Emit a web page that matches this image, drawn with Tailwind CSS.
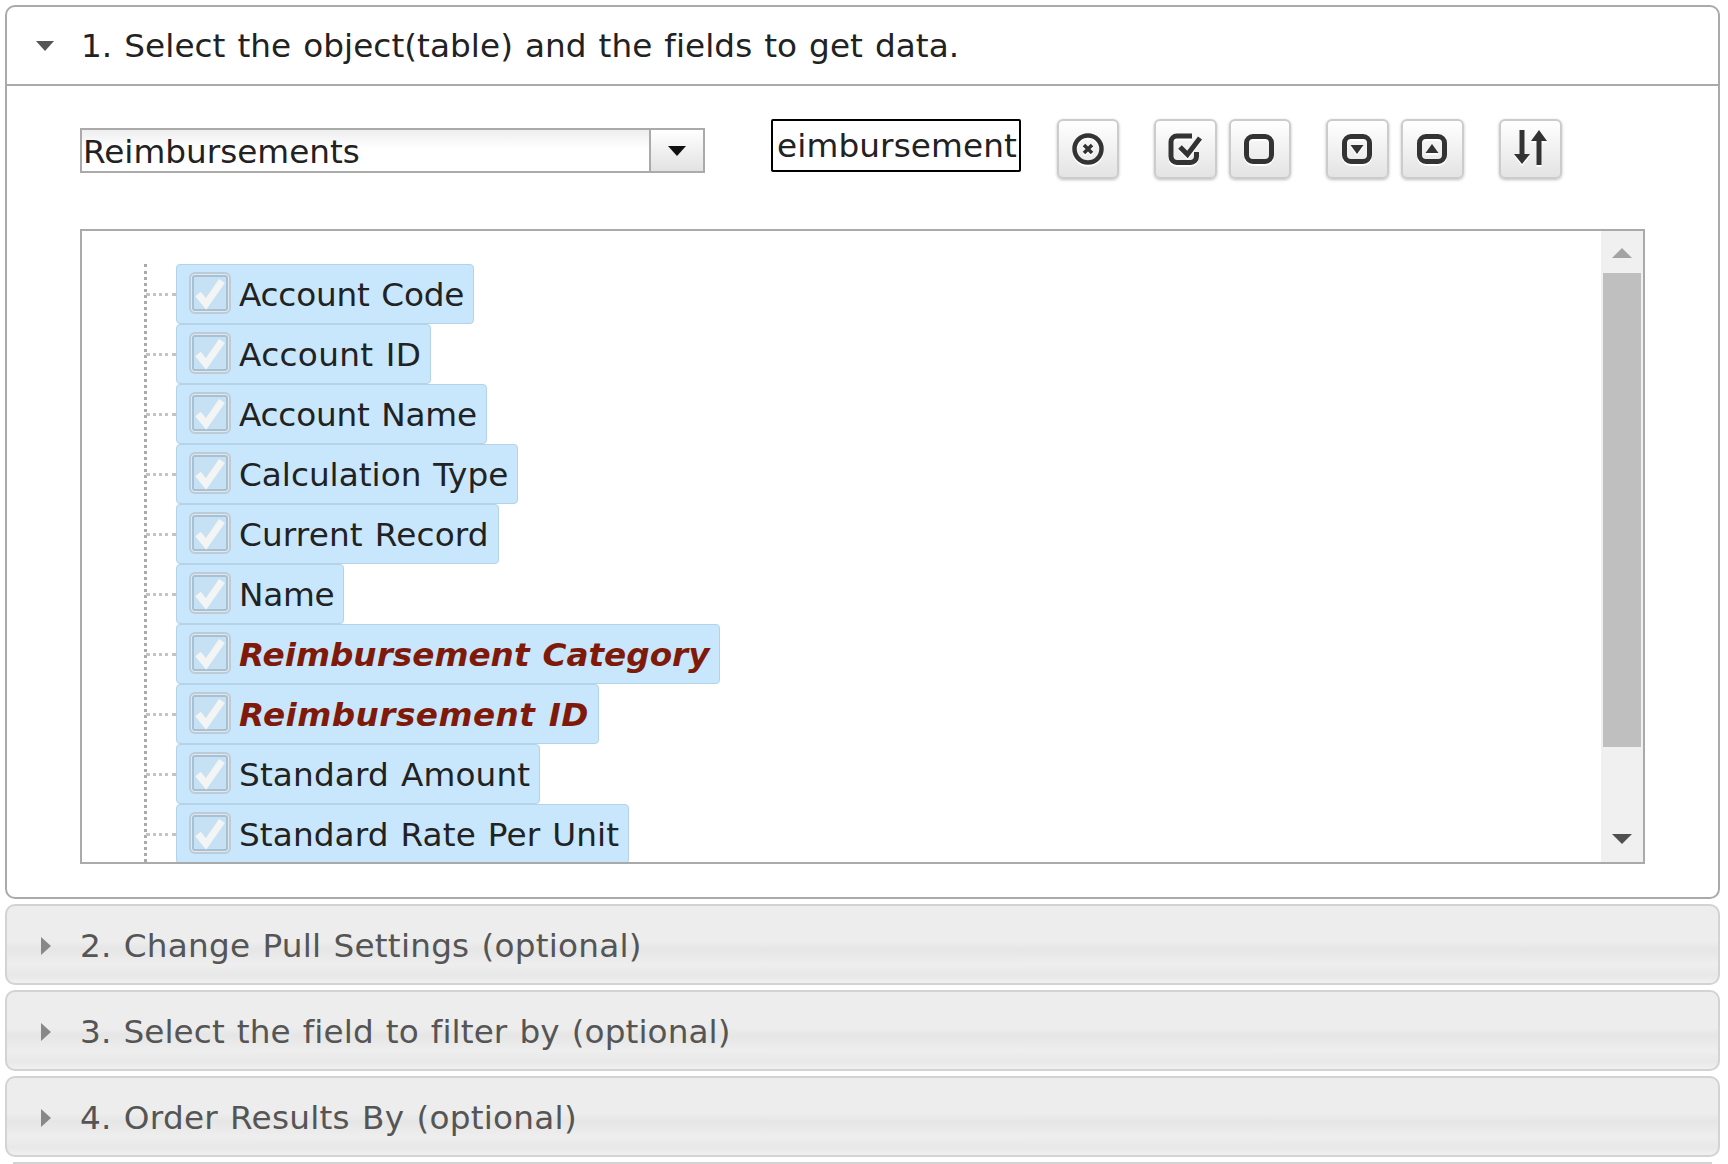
<!DOCTYPE html>
<html lang="en">
<head>
<meta charset="UTF-8" />
<title>Select Data</title>
<script src="https://cdn.jsdelivr.net/npm/@tailwindcss/browser@4"></script>
</head>
<body class="bg-white text-[#222] font-['DejaVu_Sans',sans-serif] text-[32.7px] [word-spacing:1.5px] overflow-hidden">
<div class="w-[1728px] h-[1164px] pt-[5px] pl-[5px] pr-[8px] flex flex-col gap-[6px] overflow-hidden">

	<!-- Step 1 -->
	<div class="h-[894px] mb-[-1px] shrink-0 border-2 border-[#aaa] rounded-[10px] flex flex-col">
		<div class="h-[79px] shrink-0 border-b-2 border-[#aaa] flex items-center pl-[29px]">
			<svg class="w-[18px] h-[10px]" viewBox="0 0 18 10"><path d="M0 0h18L9 10z" fill="#555"/></svg>
			<span class="ml-[27px] mt-[3px] tracking-[0.06px] whitespace-nowrap">1. Select the object(table) and the fields to get data.</span>
		</div>
		<div class="pl-[73px] pt-[33px] flex flex-col">
			<div class="flex h-[62px]">
				<!-- select -->
				<div class="w-[625px] h-[45px] mt-[9px] border-2 border-[#aaa] flex bg-[linear-gradient(#eee,#fff_45%)]">
					<span class="flex-1 pl-[1px] leading-[44px]">Reimbursements</span>
					<div class="w-[54px] border-l-2 border-[#aaa] bg-[linear-gradient(#fff,#e2e2e2)] flex items-center justify-center">
						<svg class="w-[18px] h-[10px]" viewBox="0 0 18 10"><path d="M0 0h18L9 10z" fill="#111"/></svg>
					</div>
				</div>
				<!-- search box -->
				<div class="ml-[66px] w-[250px] h-[53px] border-2 border-black rounded-[2px] overflow-hidden flex justify-end items-center pr-[2px] pt-[2px] tracking-[0.12px] whitespace-nowrap">eimbursement</div>
				<!-- toolbar -->
				<div class="ml-[36px] flex">
					<button class="w-[62px] h-[60px] border-2 border-[#ccc] rounded-[6px] bg-[linear-gradient(#fff,#e3e3e3)] shadow-[0_1px_3px_rgba(0,0,0,0.25)] flex items-center justify-center">
						<svg class="w-[32px] h-[32px] mb-[1px] mr-[1px] drop-shadow-[0_2px_0_#fff]" viewBox="0 0 32 32"><circle cx="16" cy="16" r="13.5" fill="none" stroke="#333" stroke-width="4.500"/><path d="M12 12l8 8M20 12l-8 8" stroke="#333" stroke-width="3.500"/></svg>
					</button>
					<button class="ml-[35px] w-[63px] h-[60px] border-2 border-[#ccc] rounded-[6px] bg-[linear-gradient(#fff,#e3e3e3)] shadow-[0_1px_3px_rgba(0,0,0,0.25)] flex items-center justify-center">
						<svg class="w-[34px] h-[32px] mb-[1px] mr-[1px] drop-shadow-[0_2px_0_#fff]" viewBox="0 0 34 32"><path d="M28.500 19v4.500a6 6 0 0 1-6 6H9a6 6 0 0 1-6-6V9a6 6 0 0 1 6-6h15" fill="none" stroke="#333" stroke-width="5"/><path d="M12 14l7.500 7.500L32 5" fill="none" stroke="#333" stroke-width="5"/></svg>
					</button>
					<button class="ml-[12px] w-[62px] h-[60px] border-2 border-[#ccc] rounded-[6px] bg-[linear-gradient(#fff,#e3e3e3)] shadow-[0_1px_3px_rgba(0,0,0,0.25)] flex items-center justify-center">
						<svg class="w-[32px] h-[32px] mb-[1px] mr-[2px] drop-shadow-[0_2px_0_#fff]" viewBox="0 0 32 32"><rect x="3.500" y="3.500" width="25" height="25" rx="6.500" fill="none" stroke="#333" stroke-width="5"/></svg>
					</button>
					<button class="ml-[35px] w-[63px] h-[60px] border-2 border-[#ccc] rounded-[6px] bg-[linear-gradient(#fff,#e3e3e3)] shadow-[0_1px_3px_rgba(0,0,0,0.25)] flex items-center justify-center">
						<svg class="w-[32px] h-[32px] mb-[1px] mr-[2px] drop-shadow-[0_2px_0_#fff]" viewBox="0 0 32 32"><rect x="3.500" y="3.500" width="25" height="25" rx="6.500" fill="none" stroke="#333" stroke-width="5"/><path d="M9.500 12h13L16 21z" fill="#333"/></svg>
					</button>
					<button class="ml-[12px] w-[63px] h-[60px] border-2 border-[#ccc] rounded-[6px] bg-[linear-gradient(#fff,#e3e3e3)] shadow-[0_1px_3px_rgba(0,0,0,0.25)] flex items-center justify-center">
						<svg class="w-[32px] h-[32px] mb-[1px] mr-[2px] drop-shadow-[0_2px_0_#fff]" viewBox="0 0 32 32"><rect x="3.500" y="3.500" width="25" height="25" rx="6.500" fill="none" stroke="#333" stroke-width="5"/><path d="M9.500 20h13L16 11z" fill="#333"/></svg>
					</button>
					<button class="ml-[35px] w-[63px] h-[60px] border-2 border-[#ccc] rounded-[6px] bg-[linear-gradient(#fff,#e3e3e3)] shadow-[0_1px_3px_rgba(0,0,0,0.25)] flex items-center justify-center">
						<svg class="w-[33px] h-[35px] mb-[3px] drop-shadow-[0_2px_0_#fff]" viewBox="0 0 33 35"><path d="M8 0v26M25 9v26" stroke="#333" stroke-width="5"/><path d="M0 24h16l-8 10zM17 11h16L25 0z" fill="#333"/></svg>
					</button>
				</div>
			</div>

			<!-- field tree -->
			<div class="mt-[48px] w-[1565px] h-[635px] border-2 border-[#aaa] flex overflow-hidden">
				<div class="flex-1 relative overflow-hidden pl-[94px] pt-[33px]">
					<div class="absolute left-[62px] top-[33px] bottom-0 border-l-[3px] border-dotted border-[#aaa]"></div>

					<div class="relative h-[60px] w-fit">
						<div class="absolute left-[-30px] top-[29px] w-[30px] border-t-[3px] border-dotted border-[#c4c4c4]"></div>
						<div class="h-[60px] border border-[#b5d3e6] rounded-[4px] bg-[#c8e7fd] flex items-center pl-[12px] pr-[9px]">
							<svg class="w-[42px] h-[42px] mr-[8px] mb-[3px]" viewBox="0 0 42 42"><rect x="1" y="1" width="40" height="40" rx="5" fill="#e1e9ee" stroke="#bccbd5" stroke-width="2"/><rect x="4" y="4" width="34" height="34" rx="2" fill="#c6e1f3" stroke="#a6c1d3" stroke-width="2"/><path d="M9 22l8 10L33 9" fill="none" stroke="#f3f4f4" stroke-width="7"/></svg>
							<span class="mt-[3px] tracking-[-0.2px] whitespace-nowrap">Account Code</span>
						</div>
					</div>
					<div class="relative h-[60px] w-fit">
						<div class="absolute left-[-30px] top-[29px] w-[30px] border-t-[3px] border-dotted border-[#c4c4c4]"></div>
						<div class="h-[60px] border border-[#b5d3e6] rounded-[4px] bg-[#c8e7fd] flex items-center pl-[12px] pr-[9px]">
							<svg class="w-[42px] h-[42px] mr-[8px] mb-[3px]" viewBox="0 0 42 42"><rect x="1" y="1" width="40" height="40" rx="5" fill="#e1e9ee" stroke="#bccbd5" stroke-width="2"/><rect x="4" y="4" width="34" height="34" rx="2" fill="#c6e1f3" stroke="#a6c1d3" stroke-width="2"/><path d="M9 22l8 10L33 9" fill="none" stroke="#f3f4f4" stroke-width="7"/></svg>
							<span class="mt-[3px] tracking-[0.35px] whitespace-nowrap">Account ID</span>
						</div>
					</div>
					<div class="relative h-[60px] w-fit">
						<div class="absolute left-[-30px] top-[29px] w-[30px] border-t-[3px] border-dotted border-[#c4c4c4]"></div>
						<div class="h-[60px] border border-[#b5d3e6] rounded-[4px] bg-[#c8e7fd] flex items-center pl-[12px] pr-[9px]">
							<svg class="w-[42px] h-[42px] mr-[8px] mb-[3px]" viewBox="0 0 42 42"><rect x="1" y="1" width="40" height="40" rx="5" fill="#e1e9ee" stroke="#bccbd5" stroke-width="2"/><rect x="4" y="4" width="34" height="34" rx="2" fill="#c6e1f3" stroke="#a6c1d3" stroke-width="2"/><path d="M9 22l8 10L33 9" fill="none" stroke="#f3f4f4" stroke-width="7"/></svg>
							<span class="mt-[3px] tracking-[-0.2px] whitespace-nowrap">Account Name</span>
						</div>
					</div>
					<div class="relative h-[60px] w-fit">
						<div class="absolute left-[-30px] top-[29px] w-[30px] border-t-[3px] border-dotted border-[#c4c4c4]"></div>
						<div class="h-[60px] border border-[#b5d3e6] rounded-[4px] bg-[#c8e7fd] flex items-center pl-[12px] pr-[9px]">
							<svg class="w-[42px] h-[42px] mr-[8px] mb-[3px]" viewBox="0 0 42 42"><rect x="1" y="1" width="40" height="40" rx="5" fill="#e1e9ee" stroke="#bccbd5" stroke-width="2"/><rect x="4" y="4" width="34" height="34" rx="2" fill="#c6e1f3" stroke="#a6c1d3" stroke-width="2"/><path d="M9 22l8 10L33 9" fill="none" stroke="#f3f4f4" stroke-width="7"/></svg>
							<span class="mt-[3px] whitespace-nowrap">Calculation Type</span>
						</div>
					</div>
					<div class="relative h-[60px] w-fit">
						<div class="absolute left-[-30px] top-[29px] w-[30px] border-t-[3px] border-dotted border-[#c4c4c4]"></div>
						<div class="h-[60px] border border-[#b5d3e6] rounded-[4px] bg-[#c8e7fd] flex items-center pl-[12px] pr-[9px]">
							<svg class="w-[42px] h-[42px] mr-[8px] mb-[3px]" viewBox="0 0 42 42"><rect x="1" y="1" width="40" height="40" rx="5" fill="#e1e9ee" stroke="#bccbd5" stroke-width="2"/><rect x="4" y="4" width="34" height="34" rx="2" fill="#c6e1f3" stroke="#a6c1d3" stroke-width="2"/><path d="M9 22l8 10L33 9" fill="none" stroke="#f3f4f4" stroke-width="7"/></svg>
							<span class="mt-[3px] tracking-[0.15px] whitespace-nowrap">Current Record</span>
						</div>
					</div>
					<div class="relative h-[60px] w-fit">
						<div class="absolute left-[-30px] top-[29px] w-[30px] border-t-[3px] border-dotted border-[#c4c4c4]"></div>
						<div class="h-[60px] border border-[#b5d3e6] rounded-[4px] bg-[#c8e7fd] flex items-center pl-[12px] pr-[9px]">
							<svg class="w-[42px] h-[42px] mr-[8px] mb-[3px]" viewBox="0 0 42 42"><rect x="1" y="1" width="40" height="40" rx="5" fill="#e1e9ee" stroke="#bccbd5" stroke-width="2"/><rect x="4" y="4" width="34" height="34" rx="2" fill="#c6e1f3" stroke="#a6c1d3" stroke-width="2"/><path d="M9 22l8 10L33 9" fill="none" stroke="#f3f4f4" stroke-width="7"/></svg>
							<span class="mt-[3px] tracking-[-0.25px] whitespace-nowrap">Name</span>
						</div>
					</div>
					<div class="relative h-[60px] w-fit">
						<div class="absolute left-[-30px] top-[29px] w-[30px] border-t-[3px] border-dotted border-[#c4c4c4]"></div>
						<div class="h-[60px] border border-[#b5d3e6] rounded-[4px] bg-[#c8e7fd] flex items-center pl-[12px] pr-[9px]">
							<svg class="w-[42px] h-[42px] mr-[8px] mb-[3px]" viewBox="0 0 42 42"><rect x="1" y="1" width="40" height="40" rx="5" fill="#e1e9ee" stroke="#bccbd5" stroke-width="2"/><rect x="4" y="4" width="34" height="34" rx="2" fill="#c6e1f3" stroke="#a6c1d3" stroke-width="2"/><path d="M9 22l8 10L33 9" fill="none" stroke="#f3f4f4" stroke-width="7"/></svg>
							<span class="mt-[3px] whitespace-nowrap font-bold italic text-[#7f1a0a]">Reimbursement Category</span>
						</div>
					</div>
					<div class="relative h-[60px] w-fit">
						<div class="absolute left-[-30px] top-[29px] w-[30px] border-t-[3px] border-dotted border-[#c4c4c4]"></div>
						<div class="h-[60px] border border-[#b5d3e6] rounded-[4px] bg-[#c8e7fd] flex items-center pl-[12px] pr-[9px]">
							<svg class="w-[42px] h-[42px] mr-[8px] mb-[3px]" viewBox="0 0 42 42"><rect x="1" y="1" width="40" height="40" rx="5" fill="#e1e9ee" stroke="#bccbd5" stroke-width="2"/><rect x="4" y="4" width="34" height="34" rx="2" fill="#c6e1f3" stroke="#a6c1d3" stroke-width="2"/><path d="M9 22l8 10L33 9" fill="none" stroke="#f3f4f4" stroke-width="7"/></svg>
							<span class="mt-[3px] tracking-[0.45px] whitespace-nowrap font-bold italic text-[#7f1a0a]">Reimbursement ID</span>
						</div>
					</div>
					<div class="relative h-[60px] w-fit">
						<div class="absolute left-[-30px] top-[29px] w-[30px] border-t-[3px] border-dotted border-[#c4c4c4]"></div>
						<div class="h-[60px] border border-[#b5d3e6] rounded-[4px] bg-[#c8e7fd] flex items-center pl-[12px] pr-[9px]">
							<svg class="w-[42px] h-[42px] mr-[8px] mb-[3px]" viewBox="0 0 42 42"><rect x="1" y="1" width="40" height="40" rx="5" fill="#e1e9ee" stroke="#bccbd5" stroke-width="2"/><rect x="4" y="4" width="34" height="34" rx="2" fill="#c6e1f3" stroke="#a6c1d3" stroke-width="2"/><path d="M9 22l8 10L33 9" fill="none" stroke="#f3f4f4" stroke-width="7"/></svg>
							<span class="mt-[3px] tracking-[0.15px] whitespace-nowrap">Standard Amount</span>
						</div>
					</div>
					<div class="relative h-[60px] w-fit">
						<div class="absolute left-[-30px] top-[29px] w-[30px] border-t-[3px] border-dotted border-[#c4c4c4]"></div>
						<div class="h-[60px] border border-[#b5d3e6] rounded-[4px] bg-[#c8e7fd] flex items-center pl-[12px] pr-[9px]">
							<svg class="w-[42px] h-[42px] mr-[8px] mb-[3px]" viewBox="0 0 42 42"><rect x="1" y="1" width="40" height="40" rx="5" fill="#e1e9ee" stroke="#bccbd5" stroke-width="2"/><rect x="4" y="4" width="34" height="34" rx="2" fill="#c6e1f3" stroke="#a6c1d3" stroke-width="2"/><path d="M9 22l8 10L33 9" fill="none" stroke="#f3f4f4" stroke-width="7"/></svg>
							<span class="mt-[3px] tracking-[0.1px] whitespace-nowrap">Standard Rate Per Unit</span>
						</div>
					</div>
				</div>
				<!-- scrollbar -->
				<div class="w-[42px] shrink-0 bg-[#f0f0f0] flex flex-col items-center">
					<svg class="w-[20px] h-[10px] mt-[17px] shrink-0" viewBox="0 0 20 10"><path d="M0 10h20L10 0z" fill="#a3a3a3"/></svg>
					<div class="w-[38px] h-[474px] mt-[15px] bg-[#bfbfbf] shrink-0"></div>
					<svg class="w-[20px] h-[10px] mt-[87px] shrink-0" viewBox="0 0 20 10"><path d="M0 0h20L10 10z" fill="#505050"/></svg>
				</div>
			</div>
		</div>
	</div>

	<!-- Collapsed steps -->
	<div class="h-[81px] mb-[-1px] shrink-0 border-2 border-[#d3d3d3] rounded-[10px] bg-[linear-gradient(#ededed_0%,#ededed_46%,#e6e6e6_56%,#eeeeee_76%,#e8e8e8_90%,#f0f0f0_100%)] flex items-center pl-[34px] text-[#555]">
		<svg class="w-[10px] h-[18px] mt-[2px]" viewBox="0 0 10 18"><path d="M0 0v18l10-9z" fill="#888"/></svg>
		<span class="ml-[29px] mt-[4px] tracking-[0.23px] whitespace-nowrap">2. Change Pull Settings (optional)</span>
	</div>
	<div class="h-[81px] mb-[-1px] shrink-0 border-2 border-[#d3d3d3] rounded-[10px] bg-[linear-gradient(#ededed_0%,#ededed_46%,#e6e6e6_56%,#eeeeee_76%,#e8e8e8_90%,#f0f0f0_100%)] flex items-center pl-[34px] text-[#555]">
		<svg class="w-[10px] h-[18px] mt-[2px]" viewBox="0 0 10 18"><path d="M0 0v18l10-9z" fill="#888"/></svg>
		<span class="ml-[29px] mt-[4px] tracking-[0.1px] whitespace-nowrap">3. Select the field to filter by (optional)</span>
	</div>
	<div class="h-[81px] mb-[-1px] shrink-0 border-2 border-[#d3d3d3] rounded-[10px] bg-[linear-gradient(#ededed_0%,#ededed_46%,#e6e6e6_56%,#eeeeee_76%,#e8e8e8_90%,#f0f0f0_100%)] flex items-center pl-[34px] text-[#555]">
		<svg class="w-[10px] h-[18px] mt-[2px]" viewBox="0 0 10 18"><path d="M0 0v18l10-9z" fill="#888"/></svg>
		<span class="ml-[29px] mt-[4px] tracking-[0.25px] whitespace-nowrap">4. Order Results By (optional)</span>
	</div>
	<div class="h-[2px] shrink-0 mx-[8px] bg-[#d3d3d3]"></div>
</div>
</body>
</html>
